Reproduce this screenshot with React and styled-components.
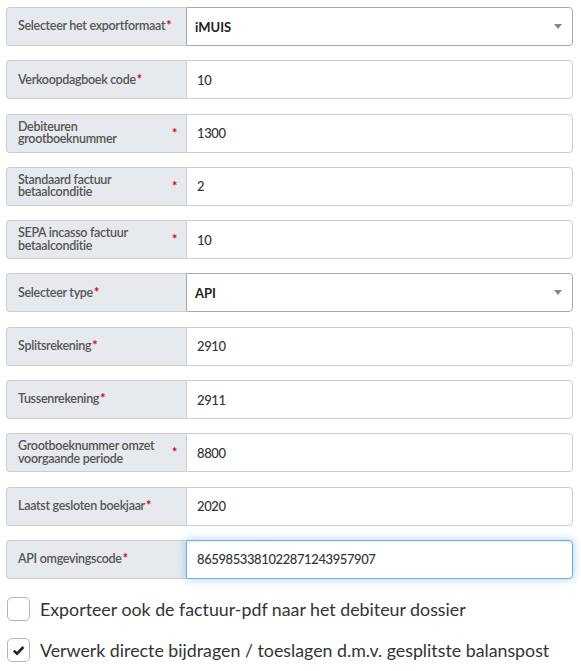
import React from 'react';
import styled, { createGlobalStyle } from 'styled-components';

const GlobalStyle = createGlobalStyle`
  body {
    margin: 0;
    background: #fff;
    font-family: Lato, "Noto Sans", sans-serif;
  }
`;

const fields = [
  { label: 'Selecteer het exportformaat', value: 'iMUIS', select: true },
  { label: 'Verkoopdagboek code', value: '10' },
  { label: 'Debiteuren grootboeknummer', value: '1300', wrap: true },
  { label: 'Standaard factuur betaalconditie', value: '2', wrap: true },
  { label: 'SEPA incasso factuur betaalconditie', value: '10', wrap: true },
  { label: 'Selecteer type', value: 'API', select: true },
  { label: 'Splitsrekening', value: '2910' },
  { label: 'Tussenrekening', value: '2911' },
  { label: 'Grootboeknummer omzet voorgaande periode', value: '8800', wrap: true },
  { label: 'Laatst gesloten boekjaar', value: '2020' },
  { label: 'API omgevingscode', value: '8659853381022871243957907', focus: true },
];

const App = () => {
  return (
    <>
      <GlobalStyle />
      <Form>
        {fields.map((f, i) => (
          <Row key={i}>
            <Label>
              {f.wrap ? (
                <>
                  <LabelText>{f.label}</LabelText>
                  <Star $side>*</Star>
                </>
              ) : (
                <LabelText>
                  {f.label}
                  <Star>*</Star>
                </LabelText>
              )}
            </Label>
            {f.select ? (
              <Select>
                <span>{f.value}</span>
                <Caret />
              </Select>
            ) : (
              <Input $focus={f.focus}>{f.value}</Input>
            )}
          </Row>
        ))}
        <Checks>
          <Check>
            <Box />
            <span>Exporteer ook de factuur-pdf naar het debiteur dossier</span>
          </Check>
          <Check>
            <Box>
              <svg width={13} height={11} viewBox="0 0 13 11">
                <path d="M1.8 5.6l3.2 3.1L11.4 2" fill="none" stroke="#222" strokeWidth={2.6} />
              </svg>
            </Box>
            <span>Verwerk directe bijdragen / toeslagen d.m.v. gesplitste balanspost</span>
          </Check>
        </Checks>
      </Form>
    </>
  );
};

const Form = styled.div`
  display: flex;
  flex-direction: column;
  gap: 14px;
  padding: 7px 8px 0 6px;
`;

const Row = styled.div`
  display: flex;
  height: 39px;
  margin-bottom: 0.3px;
`;

const Label = styled.div`
  box-sizing: border-box;
  width: 180px;
  flex: none;
  display: flex;
  align-items: center;
  padding: 0 4px 0 11px;
  background: #e6e9ed;
  border: 1px solid #cccccc;
  border-right: 0;
  border-radius: 4px 0 0 4px;
  color: #555;
  font-size: 12.5px;
  font-weight: 600;
  letter-spacing: -0.3px;
  line-height: 12.5px;
`;

const LabelText = styled.span`
  flex: 1;
`;

const Star = styled.span`
  color: #e00000;
  font-weight: 700;
  margin-left: ${p => (p.$side ? '8px' : '1px')};
  margin-right: ${p => (p.$side ? '5px' : '0')};
  align-self: ${p => (p.$side ? 'flex-start' : 'auto')};
  margin-top: ${p => (p.$side ? '13px' : '0')};
`;

const Input = styled.div`
  box-sizing: border-box;
  flex: 1;
  display: flex;
  align-items: center;
  padding-left: 10px;
  background: #fff;
  border: 1px solid ${p => (p.$focus ? '#66afe9' : '#cccccc')};
  border-radius: 0 4px 4px 0;
  box-shadow: ${p =>
    p.$focus ? 'inset 0 1px 1px rgba(0,0,0,.075), 0 0 8px rgba(102,175,233,.6)' : 'none'};
  color: #333;
  font-size: 13px;
  font-weight: 500;
  letter-spacing: -0.4px;
`;

const Select = styled(Input)`
  justify-content: space-between;
  padding: 0 10px 0 8px;
  border-color: #aaaaaa;
  color: #222;
  font-weight: 700;
  letter-spacing: 0;
`;

const Caret = styled.span`
  width: 0;
  height: 0;
  border-left: 4px solid transparent;
  border-right: 4px solid transparent;
  border-top: 5px solid #888;
`;

const Checks = styled.div`
  display: flex;
  flex-direction: column;
  gap: 17px;
  margin-top: 4px;
`;

const Check = styled.label`
  display: flex;
  align-items: center;
  gap: 10px;
  padding-left: 1px;
  color: #333;
  font-size: 17.8px;
  line-height: 24px;
`;

const Box = styled.span`
  box-sizing: border-box;
  width: 23px;
  height: 24px;
  flex: none;
  display: flex;
  align-items: center;
  justify-content: center;
  border: 1px solid #b5b5b5;
  border-radius: 5px;
  background: #fff;
`;

export default App;
